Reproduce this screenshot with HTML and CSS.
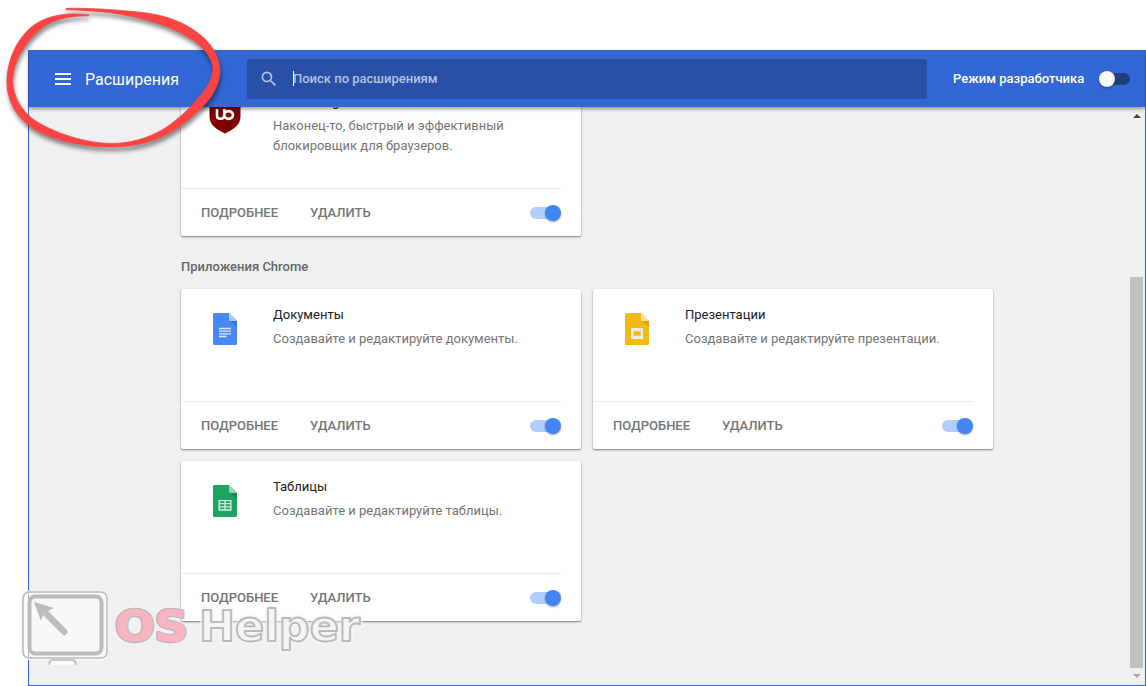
FILE: index.html
```html
<!DOCTYPE html>
<html lang="ru">

<head>
    <meta charset="UTF-8">
    <meta name="viewport" content="width=device-width, initial-scale=1.0">
    <title>Расширения</title>
    <link rel="stylesheet" href="styles.css">
</head>

<body>

<div class="window">
    <header class="toolbar">
        <div class="menu">
            <svg class="menu-icon" width="16" height="12" viewBox="0 0 16 12">
                <path d="M0 1h16M0 6h16M0 11h16" stroke="#fff" stroke-width="2"/>
            </svg>
            <h1>Расширения</h1>
        </div>
        <div class="search">
            <svg class="search-icon" width="20" height="20" viewBox="0 0 24 24">
                <path fill="#b4c3e2" d="M15.5 14h-.79l-.28-.27A6.47 6.47 0 0 0 16 9.5 6.5 6.5 0 1 0 9.5 16c1.61 0 3.09-.59 4.23-1.57l.27.28v.79l5 4.99L20.49 19l-4.99-5zm-6 0C7.01 14 5 11.99 5 9.5S7.01 5 9.5 5 14 7.01 14 9.5 11.99 14 9.5 14z"/>
            </svg>
            <span class="placeholder">Поиск по расширениям</span>
        </div>
        <div class="dev-mode">
            <span>Режим разработчика</span>
            <div class="toggle toggle-off"></div>
        </div>
    </header>

    <main>
        <div class="content">
            <div class="cards">
                <div class="card">
                    <div class="card-main">
                        <svg class="icon" width="32" height="34" viewBox="0 0 32 34">
                            <path fill="#800000" d="M16 1C11 4.500 6 5 0.500 5v11c0 9 6 12.500 15.500 17.500 9.500-5 15.500-8.500 15.500-17.500V5C26 5 21 4.500 16 1z"/>
                            <path fill="none" stroke="#fff" stroke-width="2.600" d="M8 9v6.500c0 2.500 1 3.300 3.400 3.300s3.800-1 3.800-3.300V9M15.200 15a4.400 3.900 0 1 0 8.800 0a4.400 3.900 0 1 0-8.800 0"/>
                        </svg>
                        <div class="info">
                            <h2>uBlock Origin</h2>
                            <p>Наконец-то, быстрый и эффективный блокировщик для браузеров.</p>
                        </div>
                    </div>
                    <div class="card-actions">
                        <button>Подробнее</button>
                        <button>Удалить</button>
                        <div class="toggle"></div>
                    </div>
                </div>
            </div>

            <h3>Приложения Chrome</h3>

            <div class="cards">
                <div class="card">
                    <div class="card-main">
                        <svg class="icon" width="32" height="32" viewBox="0 0 32 32">
                            <path fill="#4688f4" d="M5.500 0H20l8 8v22.500a1.500 1.500 0 0 1-1.500 1.500h-21A1.500 1.500 0 0 1 4 30.500v-29A1.500 1.500 0 0 1 5.500 0z"/>
                            <path fill="#3b72d0" d="M21 8h7v6z"/>
                            <path fill="#a9c8fb" d="M20 0l8 8h-6.500A1.500 1.500 0 0 1 20 6.500z"/>
                            <path stroke="#dfebff" stroke-width="1.300" d="M10 15.500h12M10 18.200h12M10 20.900h12M10 23.500h7.500"/>
                        </svg>
                        <div class="info">
                            <h2>Документы</h2>
                            <p>Создавайте и редактируйте документы.</p>
                        </div>
                    </div>
                    <div class="card-actions">
                        <button>Подробнее</button>
                        <button>Удалить</button>
                        <div class="toggle"></div>
                    </div>
                </div>

                <div class="card">
                    <div class="card-main">
                        <svg class="icon" width="32" height="32" viewBox="0 0 32 32">
                            <path fill="#f6b916" d="M5.500 0H20l8 8v22.500a1.500 1.500 0 0 1-1.500 1.500h-21A1.500 1.500 0 0 1 4 30.500v-29A1.500 1.500 0 0 1 5.500 0z"/>
                            <path fill="#dc9f18" d="M21 8h7v6z"/>
                            <path fill="#fbe0a0" d="M20 0l8 8h-6.500A1.500 1.500 0 0 1 20 6.500z"/>
                            <rect x="11.200" y="16.200" width="9.600" height="8.600" fill="none" stroke="#f3efe4" stroke-width="2.400"/>
                            <path fill="#f3efe4" d="M10 15h12v3.200H10zM10 22.800h12V26H10z"/>
                        </svg>
                        <div class="info">
                            <h2>Презентации</h2>
                            <p>Создавайте и редактируйте презентации.</p>
                        </div>
                    </div>
                    <div class="card-actions">
                        <button>Подробнее</button>
                        <button>Удалить</button>
                        <div class="toggle"></div>
                    </div>
                </div>

                <div class="card">
                    <div class="card-main">
                        <svg class="icon" width="32" height="32" viewBox="0 0 32 32">
                            <path fill="#1fa262" d="M5.500 0H20l8 8v22.500a1.500 1.500 0 0 1-1.500 1.500h-21A1.500 1.500 0 0 1 4 30.500v-29A1.500 1.500 0 0 1 5.500 0z"/>
                            <path fill="#198a52" d="M21 8h7v6z"/>
                            <path fill="#92d2b2" d="M20 0l8 8h-6.500A1.500 1.500 0 0 1 20 6.500z"/>
                            <path fill="none" stroke="#d9efe4" stroke-width="1.300" d="M10.100 15.600h11.800v9.400H10.100zM10 18.700h12M10 21.800h12M16 15.500V25"/>
                        </svg>
                        <div class="info">
                            <h2>Таблицы</h2>
                            <p>Создавайте и редактируйте таблицы.</p>
                        </div>
                    </div>
                    <div class="card-actions">
                        <button>Подробнее</button>
                        <button>Удалить</button>
                        <div class="toggle"></div>
                    </div>
                </div>
            </div>
        </div>

        <div class="scrollbar">
            <div class="arrow-up"></div>
            <div class="thumb"></div>
            <div class="arrow-down"></div>
        </div>
    </main>
</div>

<!-- Hand drawn circle around the menu title -->
<svg class="marker" width="240" height="160" viewBox="0 0 240 160">
    <path fill="#fe4343" stroke="#fe4343" stroke-width=".8" d="M66 8.300C90 8 112 9.500 132 11.500C168 14 188 24 204 38C215 49 220 60 220 72C219 88 209 102 196 113C182 126 167 136 148 142C134 146 122 147 110 147C88 147 58 142 36 130C17 119 7 101 7 82C7 59 18 37 34 25C48 15 68 12 89 15L89 15.700C70 15.500 55 19 43 27C25 41 12.500 62 12.500 82C13.500 97 21 110 34 120C54 133 86 143.500 112 143.500C130 143.500 148 138 162 130C180 119 194 104 204 91C210 83 213 75 213 68C212 57 203 47 193 40C169 24 139 16.500 109 12.500C94 11 80 10 66 9.700z"/>
</svg>

<!-- Site watermark -->
<svg class="watermark" width="350" height="90" viewBox="0 0 350 90">
    <rect x="3" y="8" width="84" height="67" rx="7" fill="#fff" fill-opacity=".5" stroke="#f8f8f8" stroke-width="3"/>
    <rect x="3" y="8" width="84" height="66" rx="6" fill="none" stroke="#b9b9b9" stroke-width="1.500"/>
    <rect x="9.500" y="12.500" width="72" height="57" rx="6" fill="#f8f8f8" stroke="#b9bbbc" stroke-width="4"/>
    <path fill="#b9bbbc" d="M14 18l20 6-6 3 19 19q1.500 2-.5 4t-4 .500L23 31l-2 6z"/>
    <path fill="#f8f8f8" stroke="#b9b9b9" stroke-width="1.500" d="M29.500 81v-2q0-3 3-3h20q3 0 3 3v2"/>
    <g class="wm-text">
        <text class="halo" x="95" y="57" textLength="73" lengthAdjust="spacingAndGlyphs">OS</text>
        <text class="os-edge" x="95" y="57" textLength="73" lengthAdjust="spacingAndGlyphs">OS</text>
        <text class="os" x="95" y="57" textLength="73" lengthAdjust="spacingAndGlyphs">OS</text>
        <text class="halo" x="179" y="57" textLength="161" lengthAdjust="spacingAndGlyphs">Helper</text>
        <text class="helper" x="179" y="57" textLength="161" lengthAdjust="spacingAndGlyphs">Helper</text>
    </g>
</svg>

</body>
</html>
```
FILE: styles.css
```css
body {
    font-family: Roboto, sans-serif;
    font-size: 13px;
    margin: 0;
    height: 686px;
    overflow: hidden;
    position: relative;
    background: #fff;
}

h1, h2, h3, p {
    margin: 0;
}

.window {
    box-sizing: border-box;
    height: 636px;
    margin: 50px 0 0 28px;
    border: 1px solid #3367d6;
    border-top: none;
    background: #f0f0f0;
    display: flex;
    flex-direction: column;
}

/* toolbar */
.toolbar {
    flex: none;
    height: 57px;
    background: #3367d6;
    color: #fff;
    display: flex;
    align-items: center;
    position: relative;
    z-index: 1;
    box-shadow: 0 2px 4px rgba(0, 0, 0, 0.4);
}

.menu {
    display: flex;
    align-items: center;
    width: 192px;
    padding-left: 26px;
}

.menu-icon {
    margin-right: 14px;
}

.menu h1 {
    font-size: 16px;
    font-weight: 400;
    padding-top: 2px;
}

.search {
    width: 680px;
    height: 40px;
    border-radius: 2px;
    background: #2850a7;
    display: flex;
    align-items: center;
}

.search-icon {
    margin: 0 13px 0 12px;
}

.placeholder {
    border-left: 1px solid #fff;
    line-height: 15px;
    color: #b4c3e2;
    font-weight: 500;
    margin-left: 1px;
    text-indent: -1px;
    display: block;
}

.dev-mode {
    display: flex;
    align-items: center;
    font-weight: 500;
    margin-left: 26px;
}

.dev-mode .toggle {
    margin-left: 15px;
}

/* toggle */
.toggle {
    width: 31px;
    height: 16px;
    display: flex;
    align-items: center;
    justify-content: flex-end;
}

.toggle::before {
    content: "";
    width: 23px;
    height: 12px;
    margin-right: -8px;
    border-radius: 6px;
    background: #b3cefb;
}

.toggle::after {
    content: "";
    width: 16px;
    height: 16px;
    border-radius: 50%;
    background: #4285f4;
    box-shadow: 0 1px 2px rgba(0, 0, 0, 0.35);
    z-index: 1;
}

.toggle-off {
    flex-direction: row-reverse;
}

.toggle-off::before {
    margin: 0 0 0 -8px;
    background: #1f3e80;
}

.toggle-off::after {
    background: #fafafa;
}

/* page content, scrolled under the toolbar */
main {
    flex: 1;
    min-height: 0;
    overflow: hidden;
    display: flex;
    justify-content: space-between;
}

.content {
    width: 812px;
    margin: -31px 0 0 152px;
}

.cards {
    display: flex;
    flex-wrap: wrap;
    gap: 12px;
}

.card {
    width: 400px;
    height: 160px;
    background: #fff;
    border-radius: 2px;
    box-shadow: 0 1px 2px rgba(0, 0, 0, 0.5);
}

.card-main {
    box-sizing: border-box;
    height: 112px;
    padding: 16px 20px 0 28px;
    display: flex;
}

.icon {
    flex: none;
    margin: 8px 32px 0 0;
}

.info {
    width: 270px;
}

.info h2 {
    font-size: 13px;
    font-weight: 400;
    line-height: 20px;
    color: #212121;
    margin-bottom: 4px;
}

.info p {
    line-height: 20px;
    color: #757575;
}

.card-actions {
    box-sizing: border-box;
    height: 48px;
    margin-right: 20px;
    padding-left: 20px;
    border-top: 1px solid #ebebeb;
    display: flex;
    align-items: center;
}

.card-actions button {
    background: none;
    border: none;
    padding: 0;
    margin-right: 32px;
    font-family: inherit;
    font-size: 13px;
    font-weight: 500;
    text-transform: uppercase;
    color: #757575;
}

.card-actions .toggle {
    margin-left: auto;
}

h3 {
    font-size: 13px;
    font-weight: 500;
    line-height: 20px;
    color: #666;
    padding: 21px 0 12px;
}

/* scrollbar */
.scrollbar {
    width: 13px;
    margin-right: 2px;
    display: flex;
    flex-direction: column;
    align-items: center;
}

.arrow-up {
    border: 4px solid transparent;
    border-top: none;
    border-bottom-color: #50394f;
    margin-top: 7px;
}

.thumb {
    width: 13px;
    height: 391px;
    margin-top: 159px;
    background: #c1c1c1;
}

.arrow-down {
    border: 4px solid transparent;
    border-bottom: none;
    border-top-color: #a3a3a3;
    margin-top: 6px;
}

/* overlays */
.marker {
    position: absolute;
    top: 0;
    left: 0;
    z-index: 2;
    filter: drop-shadow(1px 4px 2px rgba(0, 0, 0, 0.45));
}

.watermark {
    position: absolute;
    top: 584px;
    left: 20px;
    z-index: 2;
}

.wm-text {
    font-family: "DejaVu Sans", sans-serif;
    font-size: 42px;
    font-weight: bold;
    stroke-linejoin: round;
}

.halo {
    fill: #f8f8f8;
    stroke: #f8f8f8;
    stroke-width: 6px;
    opacity: 0.6;
}

.os-edge {
    fill: #b9b9b9;
    stroke: #b9b9b9;
    stroke-width: 3.5px;
}

.os {
    fill: #f9b4c1;
    stroke: #f9b4c1;
    stroke-width: 1px;
}

.helper {
    fill: #f6f6f6;
    fill-opacity: 0.85;
    stroke: #b9b9b9;
    stroke-width: 1.8px;
}
```
